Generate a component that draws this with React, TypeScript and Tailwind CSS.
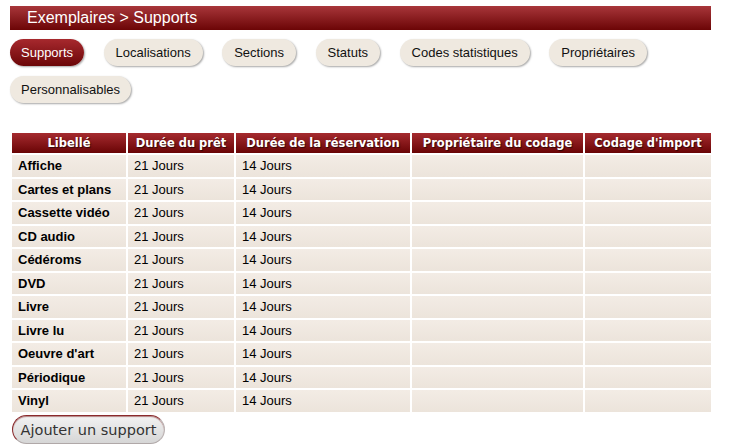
import React from "react";

const tabs = ["Supports", "Localisations", "Sections", "Statuts", "Codes statistiques", "Propriétaires", "Personnalisables"];
const rows = ["Affiche", "Cartes et plans", "Cassette vidéo", "CD audio", "Cédéroms", "DVD", "Livre", "Livre lu", "Oeuvre d'art", "Périodique", "Vinyl"];
const headers: [string, string][] = [
  ["Libellé", "w-[114px]"],
  ["Durée du prêt", "w-[106px]"],
  ["Durée de la réservation", "w-[174px]"],
  ["Propriétaire du codage", "w-[171px]"],
  ["Codage d'import", "w-[126px]"],
];

export default function App() {
  return (
    <div className="w-[735px] h-[448px] bg-white overflow-hidden font-['Liberation_Sans',Arial,sans-serif] text-[13px] text-black">
      <div className="pt-[6px] px-[10px] w-[721px]">
        <div className="h-[24px] bg-[linear-gradient(#a8363a,#6c0506)] text-white text-[16px] leading-[24px] pl-[17px]">
          Exemplaires &gt; Supports
        </div>
        <div className="flex flex-wrap gap-x-[19.5px] gap-y-[10px] mt-[9px] w-[690px]">
          {tabs.map((t, i) => (
            <div
              key={t}
              className={
                i === 0
                  ? "h-[27px] px-[11px] rounded-full leading-[28px] text-white bg-[linear-gradient(#a7292e,#6b0607)] shadow-[1px_1px_2px_rgba(0,0,0,0.35)]"
                  : i === 6
                  ? "h-[27px] px-[11px] rounded-full leading-[28px] text-[#111] bg-[#efe9e0] shadow-[1px_1px_2px_rgba(0,0,0,0.35)]"
                  : "h-[27px] px-[12px] rounded-full leading-[28px] text-[#111] bg-[#efe9e0] shadow-[1px_1px_2px_rgba(0,0,0,0.35)]"
              }
            >
              {t}
            </div>
          ))}
        </div>
        <table className="mt-[28px] border-separate border-spacing-[2px] w-[701px] table-fixed">
          <thead>
            <tr>
              {headers.map(([h, w]) => (
                <th
                  key={h}
                  className={`${w} h-[20px] p-0 text-center text-white font-bold text-[11.5px] leading-[20px] font-['DejaVu_Sans',Verdana,sans-serif] bg-[linear-gradient(#a52b2f,#690405)] [text-shadow:1px_1px_1px_rgba(0,0,0,0.6)]`}
                >
                  {h}
                </th>
              ))}
            </tr>
          </thead>
          <tbody>
            {rows.map((r) => (
              <tr key={r}>
                <td className="h-[21.5px] p-0 pl-[6px] font-bold bg-[linear-gradient(#f3ece5,#ece4db)]">{r}</td>
                <td className="h-[21.5px] p-0 pl-[6px] bg-[linear-gradient(#f3ece5,#ece4db)]">21 Jours</td>
                <td className="h-[21.5px] p-0 pl-[6px] bg-[linear-gradient(#f3ece5,#ece4db)]">14 Jours</td>
                <td className="h-[21.5px] p-0 bg-[linear-gradient(#f3ece5,#ece4db)]"></td>
                <td className="h-[21.5px] p-0 bg-[linear-gradient(#f3ece5,#ece4db)]"></td>
              </tr>
            ))}
          </tbody>
        </table>
        <button className="mt-[1px] ml-[2px] h-[29px] w-[153px] rounded-full border border-[#8a2a2c] border-b-[#b0a8a8] border-r-[#b8b0b0] bg-[linear-gradient(#f2f2f2,#d6d6d6)] text-[#333] text-[14.5px] leading-[29px] font-['DejaVu_Sans',sans-serif] shadow-[inset_0_1px_1px_rgba(120,20,20,0.5)]">
          Ajouter un support
        </button>
      </div>
    </div>
  );
}
